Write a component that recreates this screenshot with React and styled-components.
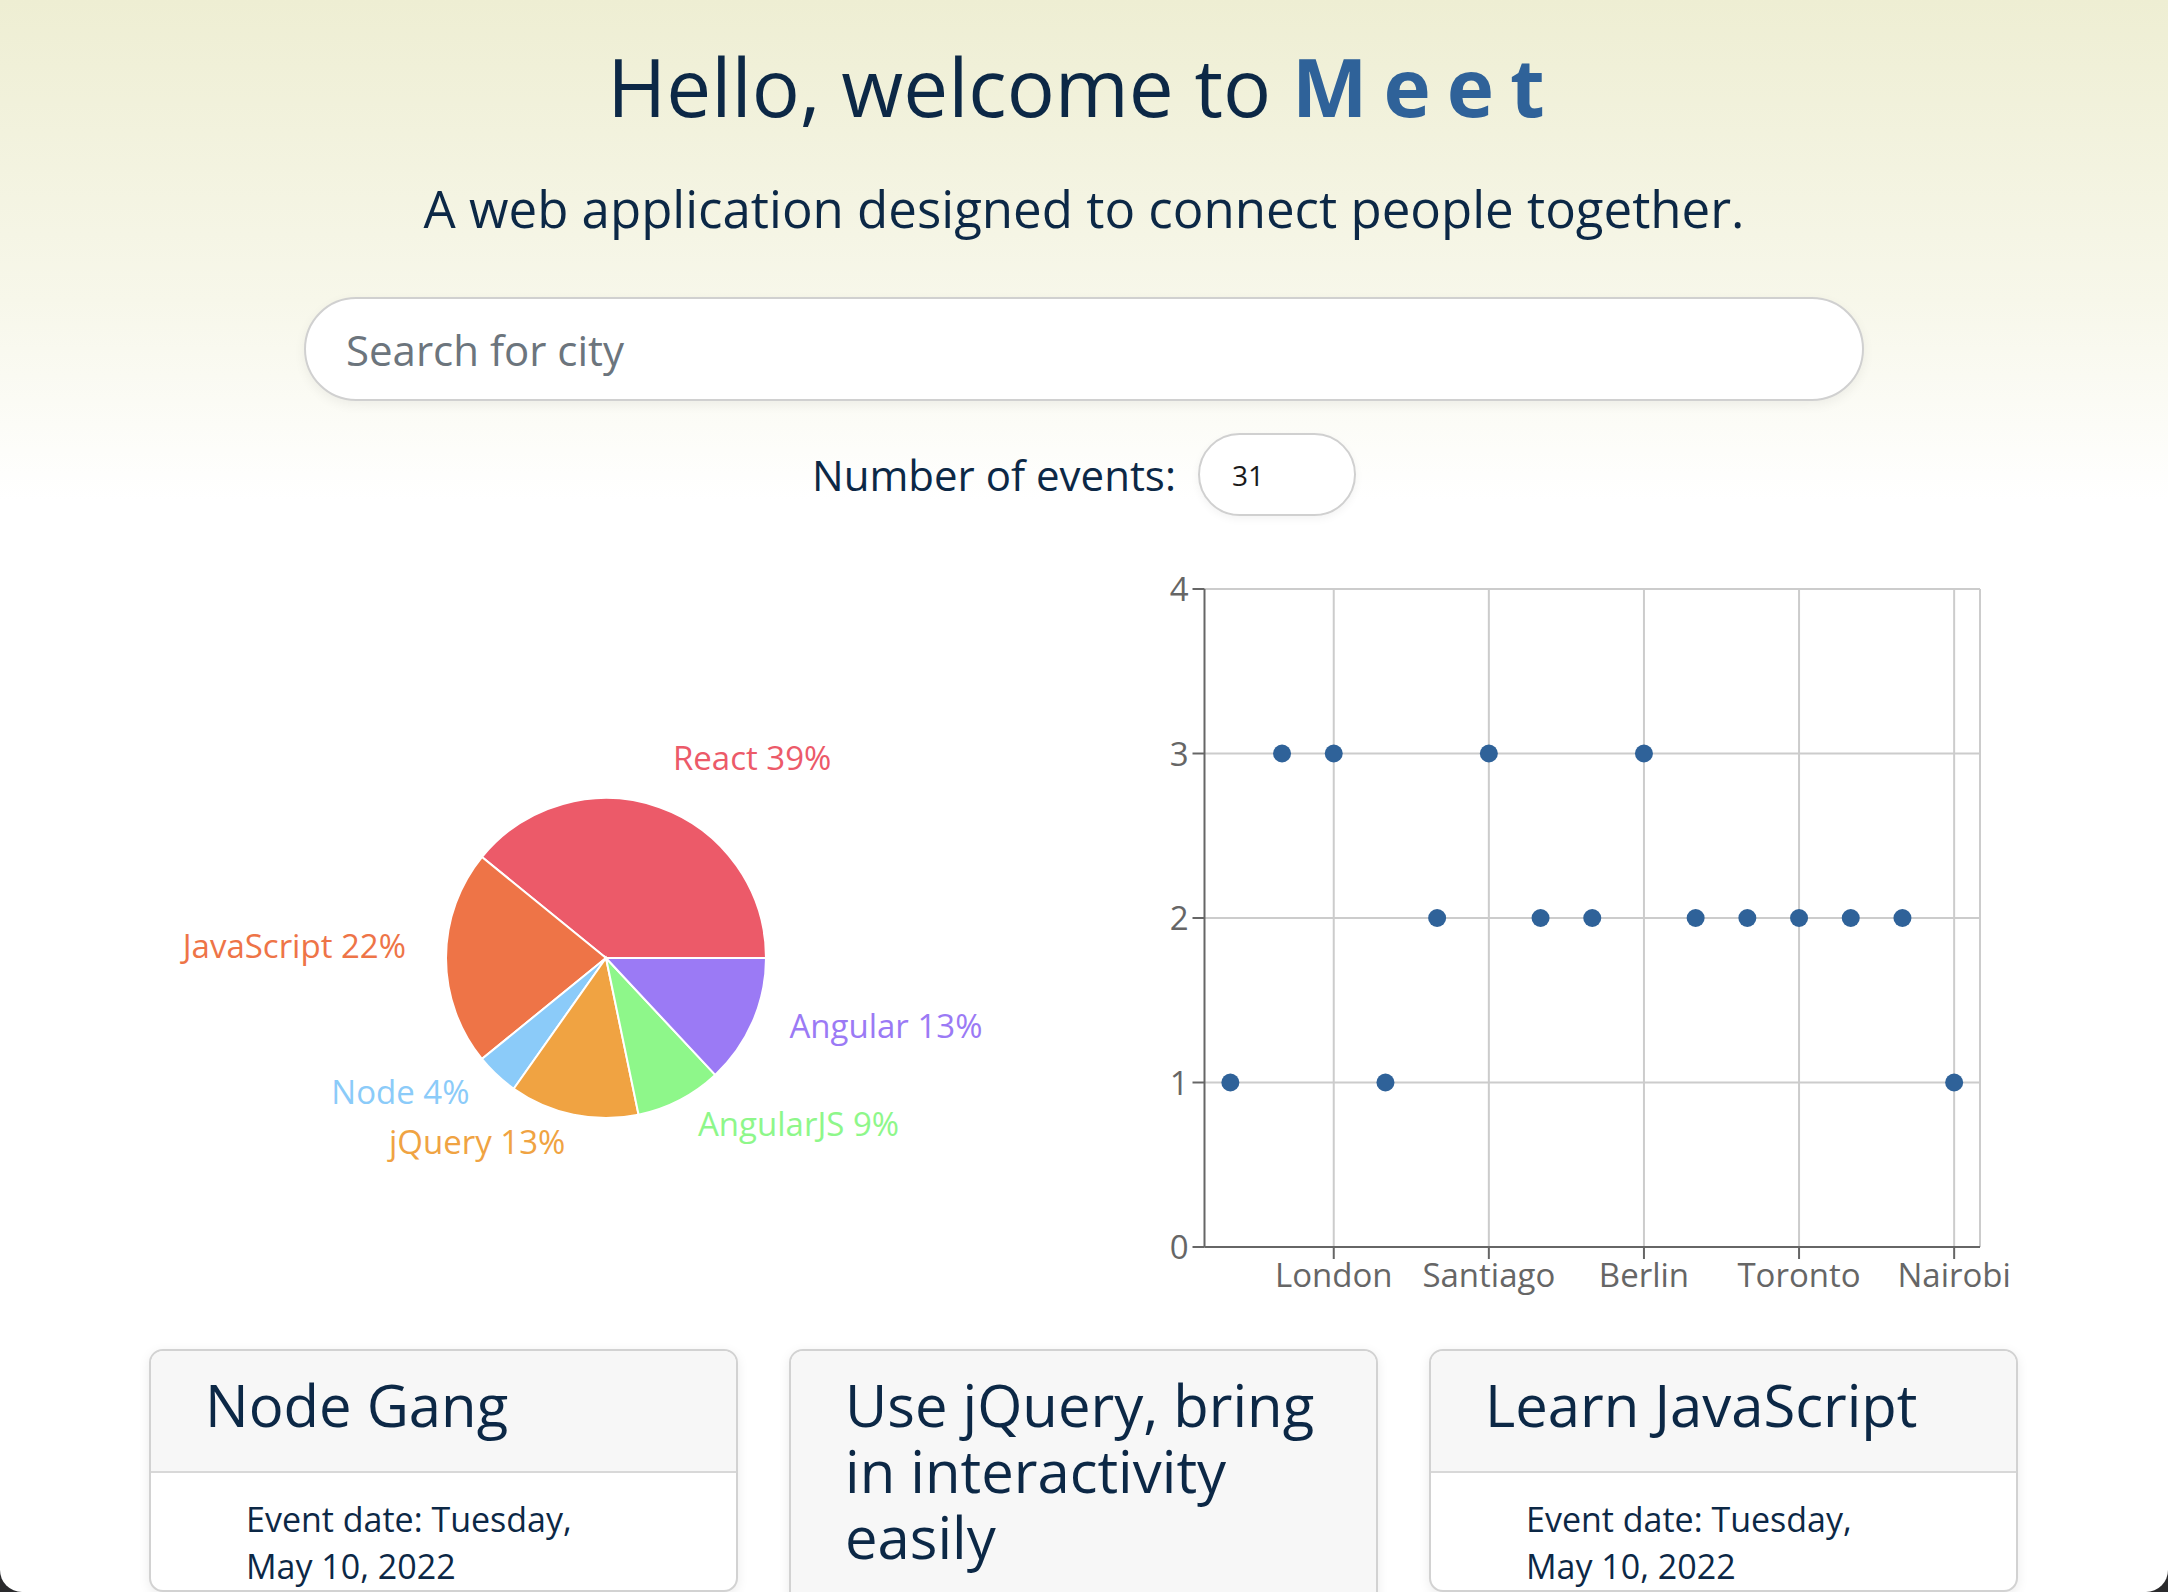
import React from "react";
import styled, { createGlobalStyle } from "styled-components";

const GlobalStyle = createGlobalStyle`
  html, body {
    margin: 0;
    padding: 0;
    background: #2a2a2c;
  }
  body {
    font-family: "Open Sans", "DejaVu Sans", sans-serif;
  }
  * { box-sizing: border-box; }
`;

const Frame = styled.div`
  height: 100vh;
  overflow: hidden;
  border-radius: 0 0 22px 22px;
  background: linear-gradient(180deg, #eeeed3 0px, #f7f7ea 300px, #ffffff 500px) no-repeat, #ffffff;
  color: #0c2846;
`;

const Title = styled.h1`
  margin: 38px 0 0;
  font-size: 80px;
  line-height: 96px;
  font-weight: 400;
  text-align: center;
`;

const Brand = styled.span`
  font-weight: 700;
  color: #2f6299;
  letter-spacing: 0.2em;
`;

const Subtitle = styled.p`
  margin: 44px 0 0;
  font-size: 51px;
  line-height: 61px;
  text-align: center;
`;

const SearchInput = styled.input`
  display: block;
  margin: 58px auto 0;
  width: 1560px;
  height: 104px;
  border-radius: 52px;
  border: 2px solid #d0d0d0;
  background: #fff;
  box-shadow: 0 4px 12px rgba(0, 0, 0, 0.06);
  padding: 0 40px;
  font-family: inherit;
  font-size: 42px;
  color: #0c2846;
  outline: none;
  &::placeholder { color: #6c757d; }
`;

const NumberRow = styled.div`
  display: flex;
  justify-content: center;
  align-items: center;
  gap: 22px;
  margin-top: 32px;
`;

const NumberLabel = styled.label`
  font-size: 42px;
  line-height: 57px;
`;

const NumberInput = styled.input`
  width: 158px;
  height: 83px;
  border-radius: 42px;
  border: 2px solid #d0d0d0;
  background: #fff;
  box-shadow: 0 3px 8px rgba(0, 0, 0, 0.05);
  padding: 0 0 0 32px;
  font-family: inherit;
  font-size: 28px;
  color: #1a1a1a;
  outline: none;
`;

const Content = styled.main`
  width: 1870px;
  margin: 24px auto 0;
`;

const ChartsGrid = styled.section`
  display: grid;
  grid-template-columns: 1fr 1fr;
  align-items: start;
`;

const ChartSvg = styled.svg`
  display: block;
  width: 935px;
  height: ${(p) => p.$h}px;
  overflow: visible;
  font-family: "Open Sans", "DejaVu Sans", sans-serif;
`;

const PieLabel = styled.text`
  font-size: 33px;
`;

const TickText = styled.text`
  font-size: 33px;
  fill: #666;
`;

const EventList = styled.ul`
  list-style: none;
  margin: 29px 0 0;
  padding: 0;
  display: grid;
  grid-template-columns: repeat(3, 589px);
  gap: 51px;
  align-items: start;
`;

const Card = styled.li`
  border: 2px solid #d2d2d2;
  border-radius: 14px;
  overflow: hidden;
  background: #fff;
  box-shadow: 0 3px 12px rgba(0, 0, 0, 0.08);
`;

const CardHeader = styled.div`
  background: #f7f7f7;
  border-bottom: 2px solid #d8d8d8;
  padding: 21px 30px 33px 54px;
`;

const CardTitle = styled.h2`
  margin: 0;
  font-size: 58px;
  line-height: 66px;
  font-weight: 400;
`;

const CardBody = styled.div`
  padding: 23px 110px 0 95px;
  font-size: 34px;
  line-height: 47px;
`;

const pieData = [
  { name: "React", value: 9, color: "#ec5a69" },
  { name: "JavaScript", value: 5, color: "#ee7447" },
  { name: "Node", value: 1, color: "#8bcbf9" },
  { name: "jQuery", value: 3, color: "#f0a342" },
  { name: "AngularJS", value: 2, color: "#8ef78a" },
  { name: "Angular", value: 3, color: "#9b7af5" },
];

const cityCounts = [
  ["Munich", 1], ["Paris", 3], ["London", 3], ["Dublin", 1], ["Lima", 2],
  ["Santiago", 3], ["Madrid", 2], ["Rome", 2], ["Berlin", 3], ["Tokyo", 2],
  ["Sydney", 2], ["Toronto", 2], ["Cairo", 2], ["Lagos", 2], ["Nairobi", 1],
];

const events = [
  { title: "Node Gang", date: "Event date: Tuesday, May 10, 2022" },
  { title: "Use jQuery, bring in interactivity easily", date: "Event date: Tuesday, May 10, 2022" },
  { title: "Learn JavaScript", date: "Event date: Tuesday, May 10, 2022" },
];

function polar(cx, cy, r, deg) {
  const a = (deg * Math.PI) / 180;
  return [cx + r * Math.cos(a), cy - r * Math.sin(a)];
}

function PieChart() {
  const cx = 457;
  const cy = 418;
  const r = 160;
  const total = pieData.reduce((s, d) => s + d.value, 0);
  let start = 0;
  const slices = pieData.map((d) => {
    const sweep = (d.value / total) * 360;
    const a0 = start;
    const a1 = start + sweep;
    start = a1;
    const [x0, y0] = polar(cx, cy, r, a0);
    const [x1, y1] = polar(cx, cy, r, a1);
    const large = sweep > 180 ? 1 : 0;
    const path = `M${cx},${cy} L${x0},${y0} A${r},${r} 0 ${large} 0 ${x1},${y1} Z`;
    const mid = (a0 + a1) / 2;
    const [lx, ly] = polar(cx, cy, 200, mid);
    return { ...d, path, lx, ly, pct: Math.round((d.value / total) * 100) };
  });
  return (
    <ChartSvg $h={600} viewBox="0 0 935 600">
      {slices.map((s) => (
        <path key={s.name} d={s.path} fill={s.color} stroke="#fff" strokeWidth="2" />
      ))}
      {slices.map((s) => (
        <PieLabel
          key={s.name + "l"}
          x={s.lx}
          y={s.ly}
          fill={s.color}
          textAnchor={s.lx > cx ? "start" : "end"}
        >
          {`${s.name} ${s.pct}%`}
        </PieLabel>
      ))}
    </ChartSvg>
  );
}

function ScatterChart() {
  const left = 120.5;
  const right = 896;
  const bottom = 707;
  const top = 49;
  const band = (right - left) / cityCounts.length;
  const yOf = (v) => bottom - v * ((bottom - top) / 4);
  const xOf = (i) => left + band * (i + 0.5);
  const tickIdx = cityCounts.map((_, i) => i).filter((i) => (cityCounts.length - 1 - i) % 3 === 0);
  return (
    <ChartSvg $h={780} viewBox="0 0 935 780">
      {[1, 2, 3, 4].map((v) => (
        <line key={"h" + v} x1={left} x2={right} y1={yOf(v)} y2={yOf(v)} stroke="#ccc" strokeWidth="2" />
      ))}
      {tickIdx.map((i) => (
        <line key={"v" + i} x1={xOf(i)} x2={xOf(i)} y1={top} y2={bottom} stroke="#ccc" strokeWidth="2" />
      ))}
      <line x1={right} x2={right} y1={top} y2={bottom} stroke="#ccc" strokeWidth="2" />
      <line x1={left} x2={left} y1={top} y2={bottom} stroke="#666" strokeWidth="2" />
      <line x1={left} x2={right} y1={bottom} y2={bottom} stroke="#666" strokeWidth="2" />
      {[0, 1, 2, 3, 4].map((v) => (
        <g key={"y" + v}>
          <line x1={left - 12} x2={left} y1={yOf(v)} y2={yOf(v)} stroke="#666" strokeWidth="2" />
          <TickText x={left - 16} y={yOf(v) + 12} textAnchor="end">{v}</TickText>
        </g>
      ))}
      {tickIdx.map((i) => (
        <g key={"x" + i}>
          <line x1={xOf(i)} x2={xOf(i)} y1={bottom} y2={bottom + 12} stroke="#666" strokeWidth="2" />
          <TickText x={xOf(i)} y={bottom + 40} textAnchor="middle">{cityCounts[i][0]}</TickText>
        </g>
      ))}
      {cityCounts.map(([name, n], i) => (
        <circle key={name} cx={xOf(i)} cy={yOf(n)} r="9" fill="#2f6299" />
      ))}
    </ChartSvg>
  );
}

export default function App() {
  return (
    <>
      <GlobalStyle />
      <Frame>
        <Title>
          Hello, welcome to <Brand>Meet</Brand>
        </Title>
        <Subtitle>A web application designed to connect people together.</Subtitle>
        <SearchInput type="text" placeholder="Search for city" readOnly />
        <NumberRow>
          <NumberLabel htmlFor="num">Number of events:</NumberLabel>
          <NumberInput id="num" type="text" defaultValue="31" />
        </NumberRow>
        <Content>
          <ChartsGrid>
            <PieChart />
            <ScatterChart />
          </ChartsGrid>
          <EventList>
            {events.map((e) => (
              <Card key={e.title}>
                <CardHeader>
                  <CardTitle>{e.title}</CardTitle>
                </CardHeader>
                <CardBody>{e.date}</CardBody>
              </Card>
            ))}
          </EventList>
        </Content>
      </Frame>
    </>
  );
}
